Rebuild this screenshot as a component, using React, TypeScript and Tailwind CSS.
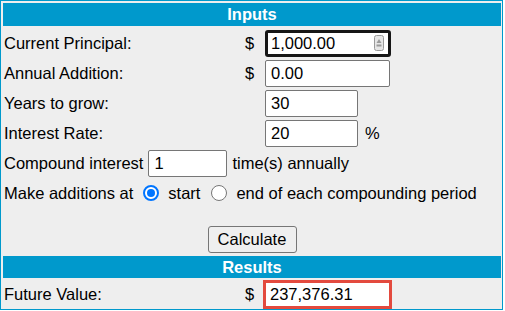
function Field({ value, className = '' }: { value: string; className?: string }) {
  return (
    <div
      className={`flex h-[27px] items-center rounded-[2px] border border-[#767676] bg-white pl-[5px] ${className}`}
    >
      {value}
    </div>
  )
}

function Radio({ checked }: { checked?: boolean }) {
  if (checked) {
    return (
      <span className="flex h-[16px] w-[16px] items-center justify-center rounded-full border-2 border-[#0075ff] bg-white">
        <span className="h-[8px] w-[8px] rounded-full bg-[#0075ff]" />
      </span>
    )
  }
  return <span className="h-[16px] w-[16px] rounded-full border border-[#767676] bg-white" />
}

export default function App() {
  return (
    <div className="h-[310px] w-[503px] border border-[#0099cc] bg-[#eeeeee] pt-[2px] pl-[2px] pr-[1px] font-['Liberation_Sans',Arial,sans-serif] text-[16.5px] leading-none text-black">
      {/* Inputs header */}
      <div className="flex h-[23px] items-center justify-center bg-[#0099cc] font-bold text-white">Inputs</div>

      <div className="mt-[2px]">
        <div className="flex h-[30px] items-center">
          <span className="w-[240px] pl-[1px]">Current Principal:</span>
          <span className="w-[22px] pl-[2px]">$</span>
          <div className="flex h-[27px] w-[126px] items-center justify-between rounded-[3px] border-[3px] border-[#161616] bg-white pl-[3px] pr-[4px]">
            <span>1,000.00</span>
            <svg width="10" height="16" viewBox="0 0 10 16">
              <rect x="0.5" y="0.5" width="9" height="15" rx="2" fill="#e6e6e6" stroke="#9a9a9a" />
              <path d="M5 4 L7.5 8 L2.5 8 Z" fill="#9a9a9a" />
              <rect x="2.5" y="9.5" width="5" height="2" fill="#9a9a9a" />
            </svg>
          </div>
        </div>

        <div className="flex h-[30px] items-center">
          <span className="w-[240px] pl-[1px]">Annual Addition:</span>
          <span className="w-[22px] pl-[2px]">$</span>
          <Field value="0.00" className="w-[125px]" />
        </div>

        <div className="flex h-[30px] items-center">
          <span className="w-[262px] pl-[1px]">Years to grow:</span>
          <Field value="30" className="w-[93px]" />
        </div>

        <div className="flex h-[30px] items-center">
          <span className="w-[262px] pl-[1px]">Interest Rate:</span>
          <Field value="20" className="w-[93px]" />
          <span className="ml-[7px]">%</span>
        </div>

        <div className="flex h-[30px] items-center">
          <span className="pl-[1px]">Compound interest</span>
          <Field value="1" className="ml-[5px] w-[79px]" />
          <span className="ml-[5px]">time(s) annually</span>
        </div>

        <div className="flex h-[30px] items-center">
          <span className="pl-[1px]">Make additions at</span>
          <span className="ml-[10px]">
            <Radio checked />
          </span>
          <span className="ml-[9px]">start</span>
          <span className="ml-[11px] flex">
            <Radio />
          </span>
          <span className="ml-[9px]">end of each compounding period</span>
        </div>
      </div>

      <div className="mt-[18px] flex justify-center">
        <button className="h-[27px] w-[89px] rounded-[3px] border border-[#767676] bg-[#efefef] text-black">
          Calculate
        </button>
      </div>

      {/* Results header */}
      <div className="mt-[3px] flex h-[22px] items-center justify-center bg-[#0099cc] font-bold text-white">Results</div>

      <div className="mt-[2px] flex h-[29px] items-center">
        <span className="w-[240px] pl-[1px]">Future Value:</span>
        <span className="w-[20px] pl-[2px]">$</span>
        <div className="flex h-[29px] w-[129px] items-center border-[3px] border-[#e34a3e] bg-white pl-[4px]">
          237,376.31
        </div>
      </div>
    </div>
  )
}
